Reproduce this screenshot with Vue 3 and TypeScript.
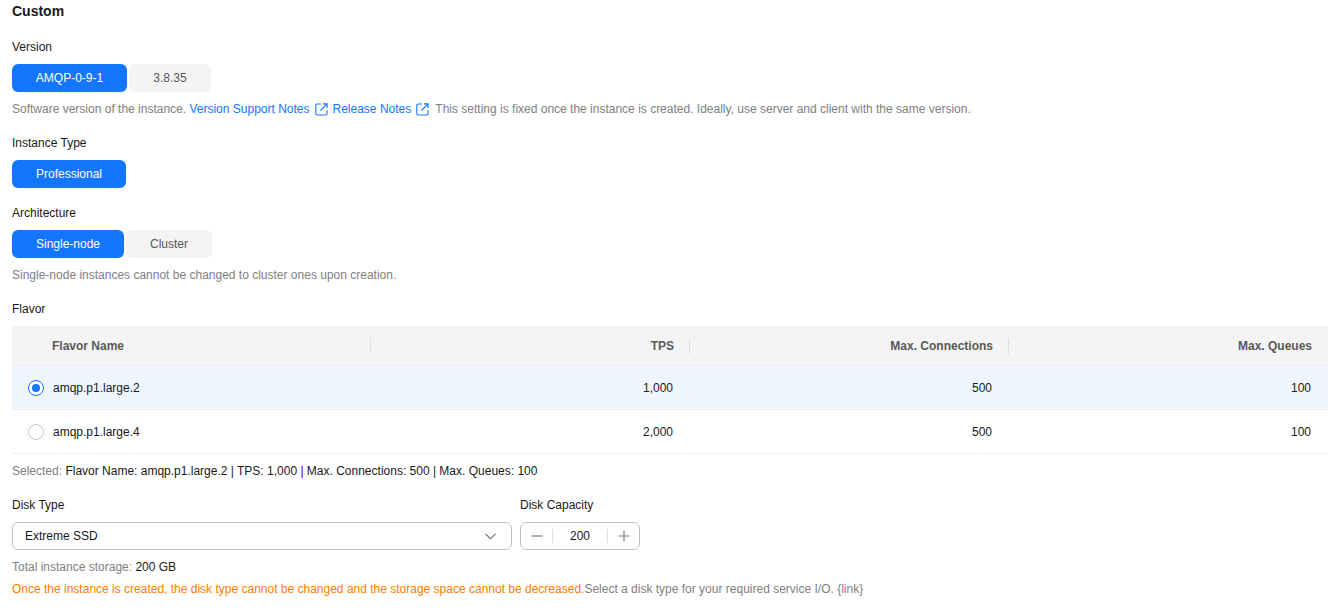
<script setup lang="ts">
interface Flavor { name: string; tps: string; conn: string; queues: string; selected: boolean }
const flavors: Flavor[] = [
  { name: 'amqp.p1.large.2', tps: '1,000', conn: '500', queues: '100', selected: true },
  { name: 'amqp.p1.large.4', tps: '2,000', conn: '500', queues: '100', selected: false },
]
</script>

<template>
  <div class="page">
    <h2 class="title">Custom</h2>

    <div class="label l-version">Version</div>
    <div class="opts">
      <button class="opt active w-amqp">AMQP-0-9-1</button>
      <button class="opt w-ver">3.8.35</button>
    </div>
    <p class="hint">
      Software version of the instance.
      <a class="link">Version Support Notes</a>
      <svg class="ext" width="13" height="13" viewBox="0 0 13 13" fill="none" stroke="#1476ff" stroke-width="1.1">
        <path d="M6 1H2a1.200 1.200 0 0 0-1.200 1.200v8.600A1.200 1.200 0 0 0 2 12h8.800a1.200 1.200 0 0 0 1.200-1.200V7" />
        <path d="M5.500 7.500 11.800 1.200M8 .9h4.100V5" />
      </svg>
      <a class="link">Release Notes</a>
      <svg class="ext last" width="13" height="13" viewBox="0 0 13 13" fill="none" stroke="#1476ff" stroke-width="1.1">
        <path d="M6 1H2a1.200 1.200 0 0 0-1.200 1.200v8.600A1.200 1.200 0 0 0 2 12h8.800a1.200 1.200 0 0 0 1.200-1.200V7" />
        <path d="M5.500 7.500 11.800 1.200M8 .9h4.100V5" />
      </svg>
      This setting is fixed once the instance is created. Ideally, use server and client with the same version.
    </p>

    <div class="label l-type">Instance Type</div>
    <div class="opts">
      <button class="opt active w-pro">Professional</button>
    </div>

    <div class="label l-arch">Architecture</div>
    <div class="opts">
      <button class="opt active w-single">Single-node</button>
      <button class="opt w-cluster">Cluster</button>
    </div>
    <p class="hint">Single-node instances cannot be changed to cluster ones upon creation.</p>

    <div class="label l-flavor">Flavor</div>
    <div class="table">
      <div class="row head">
        <div class="cell c-name">Flavor Name</div>
        <div class="cell c-num c-tps">TPS</div>
        <div class="cell c-num c-conn">Max. Connections</div>
        <div class="cell c-num c-que">Max. Queues</div>
      </div>
      <div v-for="f in flavors" :key="f.name" class="row body" :class="{ sel: f.selected }">
        <div class="cell c-name">
          <span class="radio" :class="{ on: f.selected }"></span>
          <span>{{ f.name }}</span>
        </div>
        <div class="cell c-num c-tps">{{ f.tps }}</div>
        <div class="cell c-num c-conn">{{ f.conn }}</div>
        <div class="cell c-num c-que">{{ f.queues }}</div>
      </div>
    </div>
    <p class="selected">
      <span class="muted">Selected:</span> Flavor Name: amqp.p1.large.2 | TPS: 1,000 | Max. Connections: 500 | Max. Queues: 100
    </p>

    <div class="disk">
      <div>
        <div class="label">Disk Type</div>
        <div class="select">
          <span>Extreme SSD</span>
          <svg width="11" height="7" viewBox="0 0 11 7" fill="none" stroke="#666" stroke-width="1.1">
            <path d="M.5.8l5 5 5-5" />
          </svg>
        </div>
      </div>
      <div>
        <div class="label">Disk Capacity</div>
        <div class="stepper">
          <span class="step">
            <svg width="12" height="12" viewBox="0 0 12 12" stroke="#808080" stroke-width="1.200"><path d="M.5 6h11" /></svg>
          </span>
          <span class="value">200</span>
          <span class="step">
            <svg width="12" height="12" viewBox="0 0 12 12" stroke="#808080" stroke-width="1.200"><path d="M.5 6h11M6 .5v11" /></svg>
          </span>
        </div>
      </div>
    </div>
    <p class="total"><span class="muted">Total instance storage:</span> 200 GB</p>
    <p class="warn">
      <span class="orange">Once the instance is created, the disk type cannot be changed and the storage space cannot be decreased.</span><span class="muted">Select a disk type for your required service I/O. {link}</span>
    </p>
  </div>
</template>

<style>
html, body { margin: 0; background: #fff; }
</style>

<style scoped>
.page {
  box-sizing: border-box;
  width: 1331px;
  height: 611px;
  overflow: hidden;
  padding: 3px 3px 0 12px;
  font: 12px/16px "Liberation Sans", Arial, sans-serif;
  color: #191919;
}
.title { margin: 0; font-size: 14px; line-height: 16px; font-weight: 700; color: #191919; }
.label { line-height: 16px; color: #191919; margin-bottom: 9px; }
.l-version { margin-top: 20px; }
.l-type { margin-top: 18px; }
.l-arch { margin-top: 17px; }
.l-flavor { margin-top: 18px; }
.opts { display: flex; gap: 2px; }
.opt {
  height: 28px;
  padding: 0;
  border: 0;
  border-radius: 6px;
  background: #f4f4f4;
  color: #575757;
  font: inherit;
}
.opt.active { background: #1476ff; color: #fff; }
.w-amqp { width: 115px; }
.w-ver { width: 82px; }
.w-pro { width: 114px; }
.w-single { width: 112px; }
.w-cluster { width: 86px; }
.hint { margin: 9px 0 0; color: #808080; white-space: nowrap; }
.link { color: #1476ff; }
.ext { vertical-align: -3px; margin: 0 5px; }
.ext.last { margin-right: 3px; }
.table { width: 1316px; }
.row { display: flex; box-sizing: border-box; }
.head {
  height: 40px;
  background: #f4f4f4;
  border-bottom: 1px solid #ededed;
  font-weight: 700;
  color: #595959;
}
.body { height: 44px; border-bottom: 1px solid #ededed; }
.body.sel { background: #f0f6ff; }
.cell { display: flex; align-items: center; box-sizing: border-box; position: relative; }
.c-name { width: 358px; padding-left: 16px; }
.head .c-name { padding-left: 40px; }
.c-num { justify-content: flex-end; width: 319px; padding-right: 16px; }
.c-que { width: 320px; padding-right: 17px; }
.head .c-num { padding-right: 15px; }
.head .c-que { padding-right: 16px; }
.head .cell:not(:last-child)::after {
  content: "";
  position: absolute;
  right: -1px;
  top: 12px;
  height: 16px;
  width: 1px;
  background: #dfdfdf;
}
.radio {
  box-sizing: border-box;
  width: 16px;
  height: 16px;
  margin-right: 9px;
  border: 1px solid #c7c7c7;
  border-radius: 50%;
  background: #fff;
  position: relative;
}
.radio.on { border-color: #1476ff; }
.radio.on::after {
  content: "";
  position: absolute;
  left: 3px;
  top: 3px;
  width: 8px;
  height: 8px;
  border-radius: 50%;
  background: #1476ff;
}
.selected { margin: 9px 0 0; }
.muted { color: #808080; }
.disk { display: flex; gap: 8px; margin-top: 18px; }
.select {
  box-sizing: border-box;
  width: 500px;
  height: 28px;
  display: flex;
  align-items: center;
  justify-content: space-between;
  padding: 0 15px 0 12px;
  border: 1px solid #c2c2c2;
  border-radius: 6px;
}
.stepper {
  box-sizing: border-box;
  width: 120px;
  height: 28px;
  display: flex;
  align-items: center;
  border: 1px solid #c2c2c2;
  border-radius: 6px;
}
.step { width: 31px; height: 14px; display: flex; align-items: center; justify-content: center; }
.step:first-child { border-right: 1px solid #dfdfdf; }
.step:last-child { border-left: 1px solid #dfdfdf; }
.value { flex: 1; text-align: center; }
.total { margin: 9px 0 0; }
.warn { margin: 6px 0 0; white-space: nowrap; }
.orange { color: #ff7d00; }
</style>
